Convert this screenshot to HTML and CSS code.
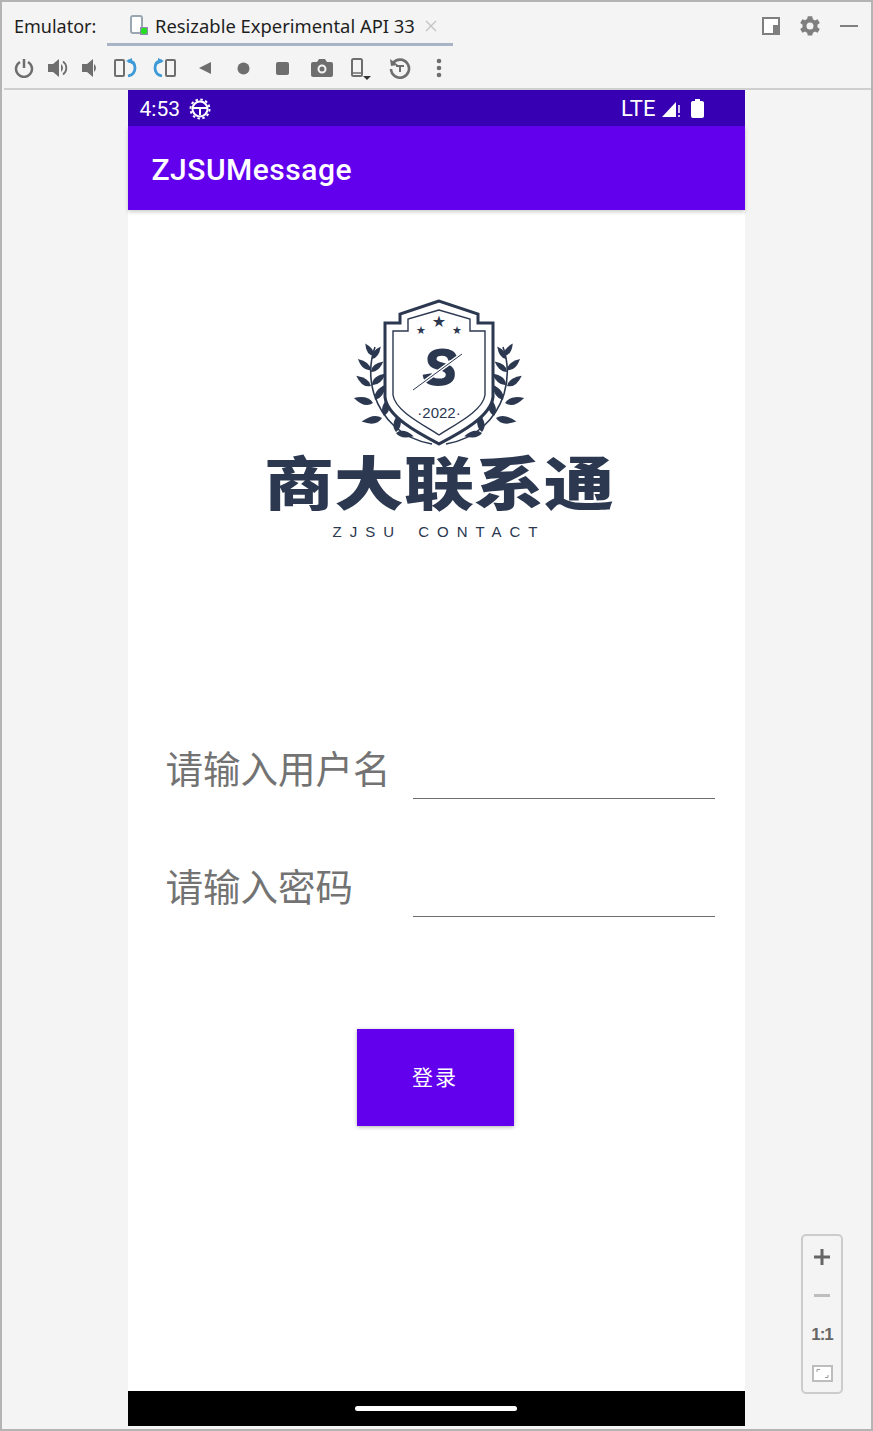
FILE: index.html
```html
<!DOCTYPE html>
<html>

<head>
    <meta charset="UTF-8" />
    <meta name="viewport" content="width=device-width, initial-scale=1" />
    <link rel="stylesheet" href="styles.css">
</head>

<body>
    <section class="window">
        <header class="tabbar">
            <span class="tabbar-title">Emulator:</span>
            <div class="tab">
                <svg class="tab-icon" width="20" height="22" viewBox="0 0 20 22">
                    <rect x="1" y="1" width="11" height="17" rx="2" fill="#fff" stroke="#9aa7b0" stroke-width="2" />
                    <rect x="10" y="12" width="8" height="8" fill="#9a86b8" />
                    <circle cx="14" cy="16" r="3.2" fill="#22e01f" />
                </svg>
                <span class="tab-label">Resizable Experimental API 33</span>
                <svg class="tab-close" width="12" height="12" viewBox="0 0 12 12">
                    <path d="M1 1L11 11M11 1L1 11" stroke="#c4c4c4" stroke-width="1.4" />
                </svg>
            </div>
            <div class="window-tools">
                <svg width="18" height="18" viewBox="0 0 18 18">
                    <rect x="1" y="1" width="16" height="16" fill="#fff" stroke="#7f7f7f" stroke-width="2" />
                    <rect x="11" y="8" width="6" height="9" fill="#7f7f7f" />
                </svg>
                <svg width="24" height="24" viewBox="0 0 24 24">
                    <path fill="#7f7f7f" fill-rule="evenodd" d="M19.400 13.200a7.500 7.500 0 0 0 0-2.400l2.400-1.700-2.200-3.800-2.700 1.200a7.500 7.500 0 0 0-2-1.200L14.200 2.200H9.800l-.7 2.900a7.500 7.500 0 0 0-2 1.200L4.400 5.300 2.200 9.100l2.400 1.700a7.500 7.500 0 0 0 0 2.400l-2.400 1.700 2.200 3.800 2.700-1.200a7.500 7.500 0 0 0 2 1.200l.7 2.900h4.400l.7-2.900a7.500 7.500 0 0 0 2-1.200l2.700 1.200 2.200-3.800zM12 15.500a3.500 3.500 0 1 1 0-7 3.500 3.500 0 0 1 0 7z" />
                </svg>
                <span class="minimize"></span>
            </div>
        </header>

        <nav class="toolbar">
            <svg width="20" height="20" viewBox="0 0 20 20">
                <path d="M6 4a8 8 0 1 0 8 0M10 1v9" fill="none" stroke="#6e6e6e" stroke-width="2.500" />
            </svg>
            <svg width="22" height="20" viewBox="0 0 22 20">
                <path fill="#6e6e6e" d="M1 6h5l6-5v18l-6-5H1z" />
                <path d="M14 6a5 5 0 0 1 0 8z" fill="#6e6e6e" />
                <path d="M16 3.500a8 8 0 0 1 0 13" fill="none" stroke="#6e6e6e" stroke-width="1.800" />
            </svg>
            <svg width="18" height="20" viewBox="0 0 18 20">
                <path fill="#6e6e6e" d="M1 6h5l6-5v18l-6-5H1z" />
                <path d="M13 6a5 5 0 0 1 0 8z" fill="#6e6e6e" />
            </svg>
            <svg width="24" height="20" viewBox="0 0 24 20">
                <rect x="2" y="2" width="9" height="16" rx="1" fill="none" stroke="#6e6e6e" stroke-width="2" />
                <path d="M15 3c5 0 7 3 7 7s-2 7-7 8" fill="none" stroke="#3d9ad6" stroke-width="2.800" />
                <path d="M13 3l6-3v6z" fill="#3d9ad6" />
            </svg>
            <svg width="24" height="20" viewBox="0 0 24 20">
                <rect x="13" y="2" width="9" height="16" rx="1" fill="none" stroke="#6e6e6e" stroke-width="2" />
                <path d="M9 3C4 3 2 6 2 10s2 7 7 8" fill="none" stroke="#3d9ad6" stroke-width="2.800" />
                <path d="M11 3L5 0v6z" fill="#3d9ad6" />
            </svg>
            <svg width="14" height="14" viewBox="0 0 14 14">
                <path fill="#6e6e6e" d="M1 7l12-6v12z" />
            </svg>
            <svg width="13" height="13" viewBox="0 0 13 13">
                <circle cx="6.500" cy="6.500" r="6" fill="#6e6e6e" />
            </svg>
            <svg width="13" height="13" viewBox="0 0 13 13">
                <rect width="13" height="13" rx="2" fill="#6e6e6e" />
            </svg>
            <svg width="22" height="18" viewBox="0 0 22 18">
                <path fill="#6e6e6e" fill-rule="evenodd" d="M2 3h4l2-3h6l2 3h4a2 2 0 0 1 2 2v11a2 2 0 0 1-2 2H2a2 2 0 0 1-2-2V5a2 2 0 0 1 2-2zM11 14.500a4.500 4.500 0 1 0 0-9 4.500 4.500 0 0 0 0 9zM11 12.500a2.500 2.500 0 1 1 0-5 2.500 2.500 0 0 1 0 5z" />
            </svg>
            <svg class="device-icon" width="22" height="23" viewBox="0 0 22 23">
                <rect x="2" y="1" width="10" height="17" rx="1.500" fill="none" stroke="#6e6e6e" stroke-width="2" />
                <path d="M3 15h8" stroke="#6e6e6e" stroke-width="1.500" />
                <path d="M13 18h8l-4 4z" fill="#333" />
            </svg>
            <svg width="22" height="22" viewBox="0 0 22 22">
                <path d="M4 6a9 9 0 1 1-2 6" fill="none" stroke="#6e6e6e" stroke-width="2.600" />
                <path d="M1 2l1 7 7-1z" fill="#6e6e6e" />
                <path d="M7 9h8M11 9v6" stroke="#6e6e6e" stroke-width="2" fill="none" />
            </svg>
            <svg width="6" height="20" viewBox="0 0 6 20">
                <circle cx="3" cy="3" r="2.300" fill="#6e6e6e" />
                <circle cx="3" cy="10" r="2.300" fill="#6e6e6e" />
                <circle cx="3" cy="17" r="2.300" fill="#6e6e6e" />
            </svg>
        </nav>

        <main class="stage">
            <div class="phone">
                <div class="statusbar">
                    <span class="clock">4:53</span>
                    <svg width="22" height="22" viewBox="0 0 22 22">
                        <circle cx="11" cy="11" r="7.500" fill="none" stroke="#fff" stroke-width="2" />
                        <circle cx="11" cy="11" r="9.500" fill="none" stroke="#fff" stroke-width="2" stroke-dasharray="2.500 2.480" />
                        <path d="M4 10h14M11 10v7" stroke="#fff" stroke-width="2" />
                    </svg>
                    <span class="status-right">
                        <span class="network">LTE</span>
                        <svg width="21" height="18" viewBox="0 0 21 18">
                            <path fill="#fff" d="M1 17L15 2v15z" />
                            <path d="M18 5v8M18 15v2" stroke="#fff" stroke-width="1.500" />
                        </svg>
                        <svg class="battery" width="13" height="19" viewBox="0 0 13 19">
                            <path fill="#fff" d="M4 0h5v2h2a2 2 0 0 1 2 1.500V17a2 2 0 0 1-2 2H2a2 2 0 0 1-2-2V3.500A2 2 0 0 1 2 2h2z" />
                        </svg>
                    </span>
                </div>
                <div class="appbar">ZJSUMessage</div>
                <div class="content">
                    <div class="logo">
                        <svg class="crest" width="200" height="160" viewBox="0 0 200 160">
                            <defs>
                                <path id="leaf" d="M0 0Q6-7 18 0Q6 6 0 0z" />
                                <g id="branch" fill="#2b3850">
                                    <path d="M92 155C62 150 42 130 34 105C29 88 30 72 35 58" fill="none" stroke="#2b3850" stroke-width="1.600" />
                                    <use href="#leaf" transform="translate(32 70) rotate(-55) scale(.85)" />
                                    <use href="#leaf" transform="translate(34 67) rotate(-125) scale(.85)" />
                                    <use href="#leaf" transform="translate(31 83) rotate(-40) scale(.9)" />
                                    <use href="#leaf" transform="translate(31 81) rotate(-140) scale(.95)" />
                                    <use href="#leaf" transform="translate(32 96) rotate(-40)" />
                                    <use href="#leaf" transform="translate(31 97) rotate(-145)" />
                                    <use href="#leaf" transform="translate(35 111) rotate(-55) scale(1.050)" />
                                    <use href="#leaf" transform="translate(33 114) rotate(-165) scale(1.100)" />
                                    <use href="#leaf" transform="translate(44 127) rotate(-75) scale(1.100)" />
                                    <use href="#leaf" transform="translate(42 129) rotate(170) scale(1.150)" />
                                    <use href="#leaf" transform="translate(56 143) rotate(-80) scale(1.100)" />
                                    <use href="#leaf" transform="translate(56 144) rotate(10) scale(1)" />
                                </g>
                            </defs>
                            <use href="#branch" />
                            <use href="#branch" transform="translate(198 0) scale(-1 1)" />
                            <path d="M99 12L60 25V34H45V108C47 128 80 145 99 155C118 145 151 128 153 108V34H138V25z" fill="#fff" stroke="#2b3850" stroke-width="3" />
                            <path d="M99 21L68 30V42H53V106C55 122 84 136 99 146C114 136 143 122 145 106V42H130V30z" fill="none" stroke="#2b3850" stroke-width="1.400" />
                            <text class="crest-star" x="99" y="38" text-anchor="middle" font-size="16">★</text>
                            <text class="crest-star" x="81" y="45" text-anchor="middle" font-size="11">★</text>
                            <text class="crest-star" x="117" y="45" text-anchor="middle" font-size="11">★</text>
                            <text class="crest-s" x="100" y="96" text-anchor="middle" font-size="50">S</text>
                            <path d="M73 101L122 65" stroke="#fff" stroke-width="3.500" />
                            <path d="M73 101L122 65" stroke="#2b3850" stroke-width="1" />
                            <text class="crest-year" x="99" y="129" text-anchor="middle" font-size="15">·2022·</text>
                        </svg>
                        <div class="wordmark">商大联系通</div>
                        <div class="tagline">ZJSU CONTACT</div>
                    </div>

                    <form class="login">
                        <div class="field">
                            <label>请输入用户名</label>
                            <span class="underline"></span>
                        </div>
                        <div class="field">
                            <label>请输入密码</label>
                            <span class="underline"></span>
                        </div>
                        <button type="button" class="login-btn">登录</button>
                    </form>
                </div>
                <div class="navbar"><span class="pill"></span></div>
            </div>

            <div class="zoom-ctrl">
                <svg width="16" height="16" viewBox="0 0 16 16">
                    <path d="M8 0v16M0 8h16" stroke="#666" stroke-width="3" />
                </svg>
                <span class="zoom-minus"></span>
                <span class="zoom-fit">1:1</span>
                <svg width="21" height="17" viewBox="0 0 21 17">
                    <rect x="1" y="1" width="19" height="15" fill="#fff" stroke="#bdbdbd" stroke-width="2" />
                    <path d="M5 7V4.500H8M16 10v2.500H13" fill="none" stroke="#9a9a9a" />
                </svg>
            </div>
        </main>
    </section>
</body>

</html>
```

FILE: styles.css
```css
* {
    box-sizing: border-box;
}

body {
    margin: 0;
    padding: 0;
    background-color: #f4f4f4;
}

.window {
    position: relative;
    display: flex;
    flex-direction: column;
    width: 873px;
    height: 1431px;
    border: 2px solid #b4b4b4;
    background-color: #f4f4f4;
    font-family: "Noto Sans", "Liberation Sans", sans-serif;
}

.tabbar {
    display: flex;
    align-items: flex-start;
    height: 44px;
    padding-left: 12px;
    color: #1f1f1f;
    font-size: 18px;
}

.tabbar-title {
    width: 93px;
    line-height: 48px;
}

.tab {
    display: flex;
    align-items: center;
    width: 346px;
    height: 44px;
    padding: 6px 0 0 23px;
    border-bottom: 3px solid #a8b4c6;
}

.tab-icon {
    margin-right: 5px;
    flex: none;
}

.tab-label {
    font-size: 18.400px;
    white-space: nowrap;
}

.tab-close {
    margin-left: 10px;
}

.window-tools {
    display: flex;
    align-items: center;
    gap: 18px;
    height: 48px;
    margin-left: auto;
    padding-right: 13px;
}

.minimize {
    display: block;
    width: 18px;
    height: 2px;
    background-color: #7f7f7f;
}

.toolbar {
    display: grid;
    grid-template-columns: 34px 34px 30px 40px 40px repeat(7, 39px);
    justify-items: center;
    align-items: center;
    height: 44px;
    margin-left: 2px;
    padding: 2px 0 0 3px;
    border-bottom: 2px solid #cfcfcf;
}

.device-icon {
    margin-top: 3px;
}

.stage {
    flex: 1;
    display: flex;
    justify-content: center;
    min-height: 0;
}

.phone {
    display: flex;
    flex-direction: column;
    width: 617px;
    height: 1336px;
    margin-right: 1px;
    background-color: #fff;
}

.statusbar {
    display: flex;
    align-items: center;
    gap: 9px;
    flex: none;
    height: 36px;
    padding: 1px 41px 0 12px;
    background-color: #3700b3;
    color: #fff;
    font-family: Roboto, sans-serif;
    font-size: 21px;
}

.status-right {
    display: flex;
    align-items: center;
    gap: 5px;
    margin-left: auto;
}

.network {
    font-size: 22px;
}

.battery {
    margin-left: 4px;
}

.appbar {
    flex: none;
    height: 84px;
    padding-left: 24px;
    background-color: #6200ee;
    box-shadow: 0 2px 4px rgba(0, 0, 0, .2);
    color: #fff;
    font-family: Roboto, sans-serif;
    font-size: 30px;
    font-weight: 500;
    letter-spacing: .5px;
    line-height: 87px;
}

.content {
    flex: 1;
    display: flex;
    flex-direction: column;
    align-items: center;
}

.logo {
    display: flex;
    flex-direction: column;
    align-items: center;
    margin-left: 6px;
    padding-top: 79px;
}

.crest {
    display: block;
    margin-left: 2px;
}

.crest-star {
    fill: #2b3850;
    font-family: "DejaVu Sans", sans-serif;
}

.crest-s {
    fill: #2b3850;
    stroke: #2b3850;
    stroke-width: 2px;
    font-family: "Liberation Sans", sans-serif;
    font-weight: 700;
    font-style: italic;
}

.crest-year {
    fill: #2b3850;
    font-family: "Liberation Sans", sans-serif;
}

.wordmark {
    color: #2b3850;
    font-family: "Noto Sans CJK SC", sans-serif;
    font-size: 70px;
    font-weight: 900;
    line-height: 62px;
    white-space: nowrap;
    transform: scaleY(.82);
}

.tagline {
    margin-top: 11px;
    color: #2b3850;
    font-family: "Liberation Sans", sans-serif;
    font-size: 15px;
    letter-spacing: 8px;
    word-spacing: 4px;
    line-height: 20px;
}

.login {
    align-self: stretch;
    display: flex;
    flex-direction: column;
    padding-top: 199px;
}

.field {
    display: flex;
    align-items: flex-end;
    height: 60px;
    margin-bottom: 58px;
    padding-left: 38px;
}

.field label {
    width: 247px;
    flex: none;
    margin-bottom: 4px;
    color: #737373;
    font-family: "Noto Sans CJK SC", sans-serif;
    font-size: 37.500px;
    line-height: 60px;
    white-space: nowrap;
}

.underline {
    display: block;
    width: 302px;
    height: 1px;
    margin-bottom: 2px;
    background-color: #6f6f6f;
}

.login-btn {
    align-self: center;
    width: 157px;
    height: 97px;
    margin-top: 52px;
    margin-right: 2px;
    padding-bottom: 4px;
    border: none;
    background-color: #6200ee;
    box-shadow: 0 1px 4px rgba(0, 0, 0, .3);
    color: #fff;
    font-family: "Noto Sans CJK SC", sans-serif;
    font-size: 21px;
    letter-spacing: 2px;
}

.navbar {
    display: flex;
    align-items: center;
    justify-content: center;
    flex: none;
    height: 35px;
    background-color: #000;
}

.pill {
    display: block;
    width: 162px;
    height: 5px;
    border-radius: 3px;
    background-color: #fff;
}

.zoom-ctrl {
    position: absolute;
    top: 1232px;
    left: 799px;
    display: grid;
    grid-auto-rows: 39px;
    justify-items: center;
    align-items: center;
    width: 42px;
    height: 160px;
    padding-top: 1px;
    border: 2px solid #ccc;
    border-radius: 5px;
    background-color: #f4f4f4;
}

.zoom-minus {
    display: block;
    width: 16px;
    height: 3px;
    background-color: #bdbdbd;
}

.zoom-fit {
    color: #666;
    font-family: "Liberation Sans", sans-serif;
    font-size: 17px;
    font-weight: 700;
    letter-spacing: -1px;
}
```
